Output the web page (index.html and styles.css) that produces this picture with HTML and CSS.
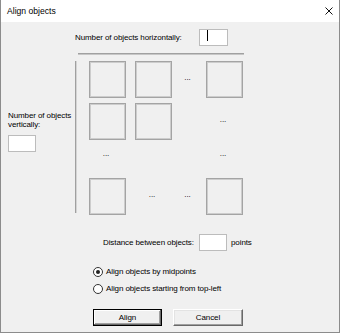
FILE: index.html
```html
<!DOCTYPE html>
<html lang="en">
<head>
  <meta charset="UTF-8" />
  <title>Align objects</title>
  <link rel="stylesheet" href="styles.css">
</head>
<body>
  <div class="window">
    <div class="titlebar">
      <span class="title">Align objects</span>
      <svg class="close" width="8" height="8" viewBox="0 0 8 8">
        <path d="M0.5 0.5 L7.5 7.5 M7.5 0.5 L0.5 7.5" stroke="#111" stroke-width="1" fill="none" />
      </svg>
    </div>

    <div class="row-h">
      <span class="label">Number of objects horizontally:</span>
      <div class="field"><span class="caret"></span></div>
    </div>
    <div class="hline"></div>

    <div class="matrix">
      <div class="vside">
        <div class="vlabel">Number of objects vertically:</div>
        <div class="field"></div>
      </div>
      <div class="vline"></div>
      <div class="grid">
        <div class="sq"></div><div class="sq"></div><div class="dots">...</div><div class="sq"></div>
        <div class="sq"></div><div class="sq"></div><div></div><div class="dots">...</div>
        <div class="dots r3">...</div><div></div><div></div><div class="dots r3">...</div>
        <div class="sq"></div><div class="dots">...</div><div class="dots">...</div><div class="sq"></div>
      </div>
    </div>

    <div class="row-d">
      <span class="label">Distance between objects:</span>
      <div class="field"></div>
      <span class="unit">points</span>
    </div>

    <div class="radios">
      <div class="radio"><span class="dot on"></span>Align objects by midpoints</div>
      <div class="radio"><span class="dot"></span>Align objects starting from top-left</div>
    </div>

    <div class="buttons">
      <button type="button" class="btn default">Align</button>
      <button type="button" class="btn cancel">Cancel</button>
    </div>
  </div>
</body>
</html>
```

FILE: styles.css
```css
* { box-sizing: border-box; }
html, body { margin: 0; padding: 0; background: #fff; }
body { font-family: "Liberation Sans", Arial, sans-serif; font-size: 8px; letter-spacing: -0.1px; color: #000; }

.window { width: 340px; height: 333px; border: 1px solid #8c8c8c; border-top: none; background: #f0f0f0; display: flex; flex-direction: column; }
.titlebar { height: 22px; flex: none; background: #fff; display: flex; align-items: center; justify-content: space-between; padding: 0 6px; }
.title { font-size: 8.6px; letter-spacing: 0; }
.close { display: block; margin-top: -1px; }

.field { width: 29px; height: 17px; background: #fff; border: 1px solid #bcbcbc; flex: none; }
.caret { display: block; width: 1px; height: 11px; background: #000; margin-left: 7px; }

.row-h { display: flex; align-items: center; margin-top: 7px; padding-left: 74px; }
.row-h .label { width: 124px; }
.hline { margin: 7px 0 0 77px; width: 166px; height: 2px; border-top: 1px solid #a0a0a0; border-bottom: 1px solid #c6c6c6; }

.matrix { display: flex; align-items: flex-start; }
.vside { width: 74px; padding: 56px 0 0 7px; }
.vlabel { width: 66px; line-height: 9px; }
.vside .field { margin-top: 6px; width: 28px; }
.vline { width: 2px; height: 152px; margin-top: 6px; border-left: 1px solid #a0a0a0; border-right: 1px solid #d4d4d4; }
.grid { display: grid; grid-template-columns: 37px 37px 16px 37px; grid-template-rows: 37px 37px 28px 37px; gap: 5px 9px; margin: 6px 0 0 12px; }
.sq { border: 1px solid #a4a4a4; box-shadow: inset 0 0 0 1px #cdcdcd; }
.dots { display: flex; align-items: center; justify-content: center; padding: 0 3px 4px 0; line-height: 9px; }
.dots.r3 { align-items: flex-start; padding-top: 4px; }

.row-d { display: flex; align-items: center; margin-top: 19px; padding-left: 102px; }
.row-d .label { width: 96px; }
.row-d .field { width: 28px; }
.unit { margin-left: 4px; }

.radios { margin-top: 12px; padding-left: 92px; }
.radio { display: flex; align-items: center; height: 17px; }
.dot { width: 10px; height: 10px; border: 1px solid #333; border-radius: 50%; background: #fff; margin-right: 3px; display: flex; align-items: center; justify-content: center; }
.dot.on::after { content: ""; width: 4px; height: 4px; border-radius: 50%; background: #222; }

.buttons { display: flex; gap: 11px; margin-top: 12px; padding-left: 92px; }
.btn { font: inherit; letter-spacing: inherit; color: #000; padding: 0; width: 69px; height: 17px; background: #f0f0f0; border: 1px solid; border-color: #fff #696969 #696969 #fff; box-shadow: inset -1px -1px #a0a0a0, inset 1px 1px #e3e3e3; }
.btn.cancel { width: 70px; }
.btn.default { border-color: #000; box-shadow: inset -1px -1px #696969, inset 1px 1px #fff, inset -2px -2px #a0a0a0; }
```
